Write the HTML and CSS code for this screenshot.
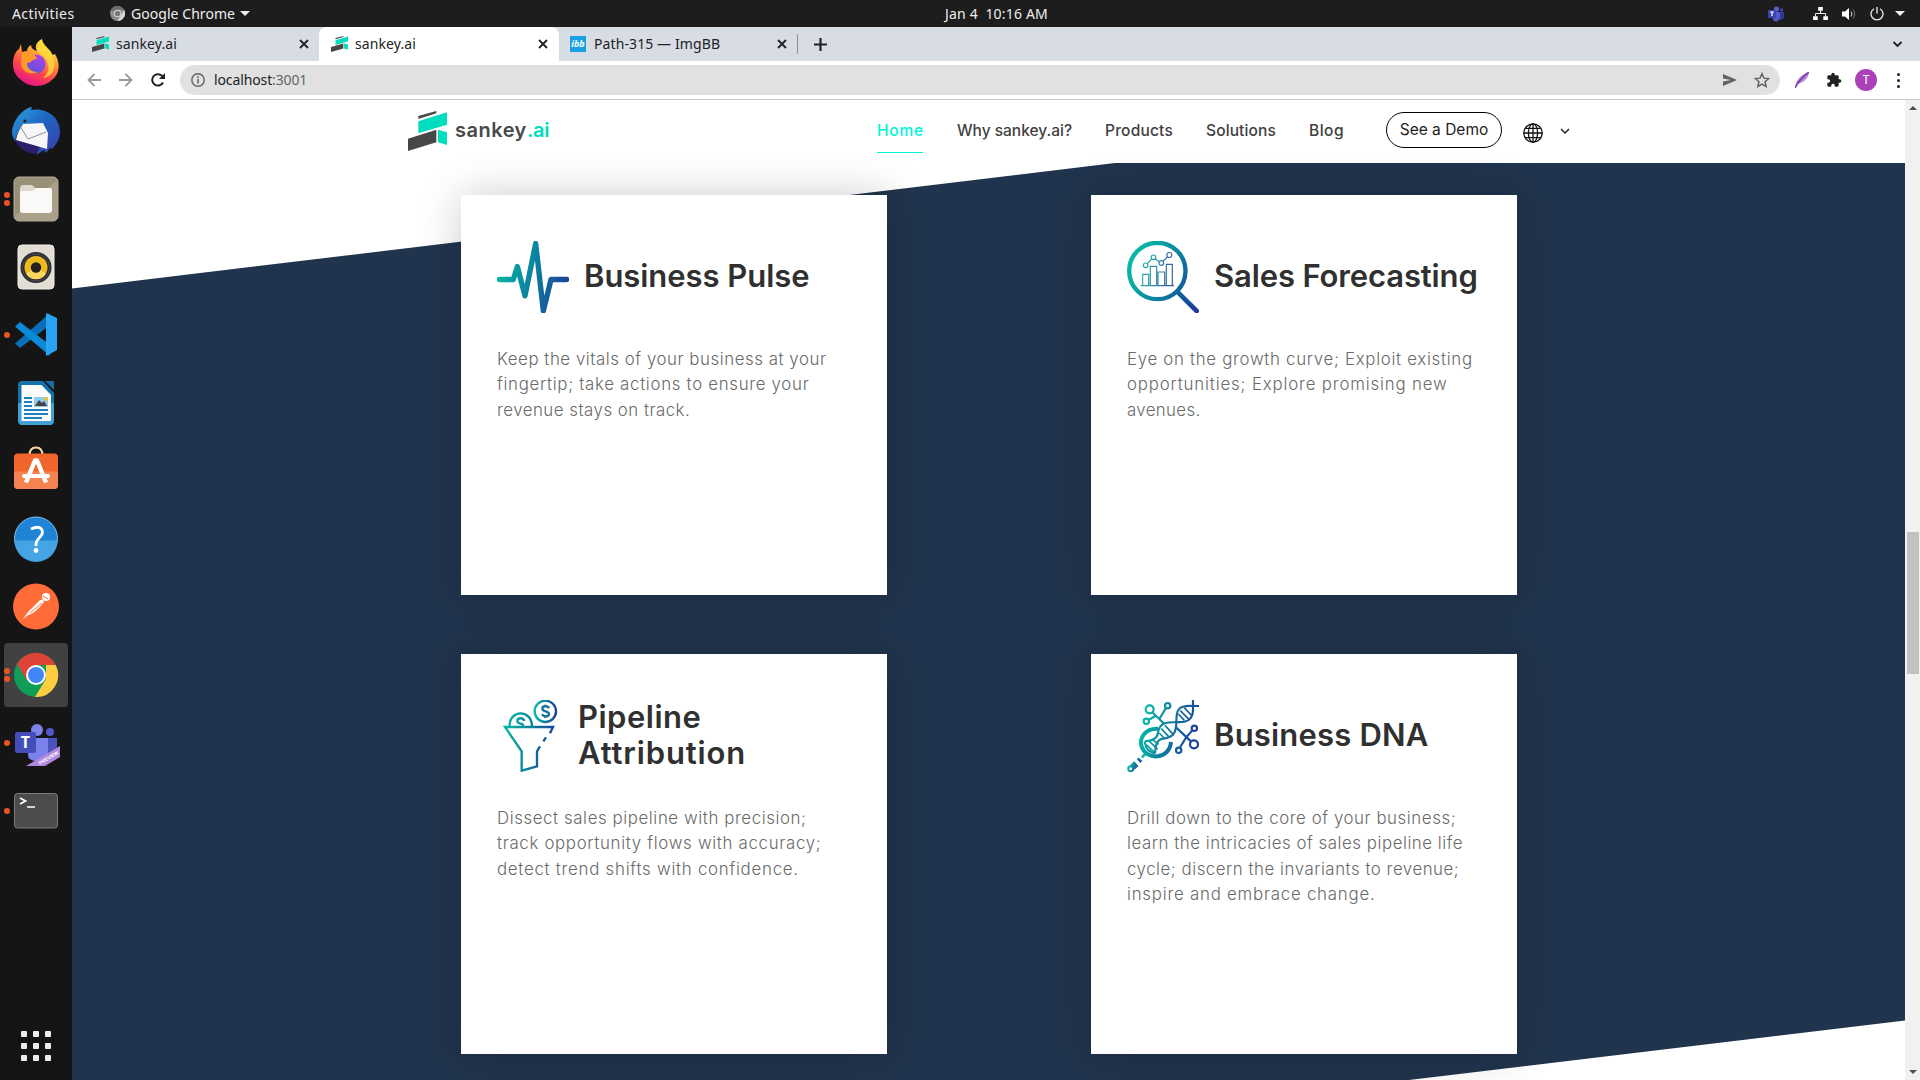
FILE: index.html
```html
<!DOCTYPE html>
<html lang="en">
<head>
<meta charset="utf-8">
<title>sankey.ai</title>
<link rel="stylesheet" href="styles.css">
</head>
<body>
<svg class="defs" width="0" height="0" aria-hidden="true">
  <defs>
    <symbol id="mark" viewBox="24 33 117 120" preserveAspectRatio="none">
      <path fill="#474748" d="M55 48 109 33v7L55 57zM24 116l85-27v38L24 153z"/>
      <path fill="#00dcbe" d="M55 64 141 37v37L55 100zM114 89l27 8v38l-27-8z"/>
    </symbol>
    <symbol id="close" viewBox="0 0 10 10"><path d="M1 1l8 8M9 1L1 9" stroke="#202124" stroke-width="1.800" fill="none"/></symbol>
  </defs>
</svg>
<div class="desktop">
  <header class="topbar">
    <span class="activities">Activities</span>
    <svg class="tb-chrome" viewBox="0 0 16 16"><circle cx="8" cy="8" r="8" fill="#8b8b8b"/><path d="M8 8 1 4a8 8 0 0 1 14 0H8z" fill="#6d6d6d"/><path d="M15 4a8 8 0 0 1-7 12l3.500-6z" fill="#d5d5d5"/><circle cx="8" cy="8" r="4" fill="#ddd"/><circle cx="8" cy="8" r="3" fill="#777"/></svg>
    <span class="appname">Google Chrome</span>
    <i class="tri"></i>
    <span class="clock">Jan 4&nbsp; 10:16 AM</span>
    <div class="tray">
      <svg class="tr-teams" viewBox="0 0 16 16"><circle cx="8.500" cy="3" r="2.600" fill="#5a62c3"/><circle cx="13.500" cy="4" r="1.700" fill="#3d45a5"/><path d="M11 6h5v4.500a3 3 0 0 1-4 3z" fill="#2f3896"/><path d="M5 6h7v6a4 4 0 0 1-7 2z" fill="#5059c9"/><path d="M0 4h8v8H0z" fill="#3b43ad"/><path d="M2 6h4M4 6v4" stroke="#fff" stroke-width="1.200"/></svg>
      <svg class="tr-net" viewBox="0 0 16 14"><path d="M5.500 0h5v4h-5zM0 10h5v4H0zM11 10h5v4h-5z" fill="#fff"/><path d="M8 4v3M2.500 10V7h11v3" stroke="#fff" fill="none"/></svg>
      <svg class="tr-vol" viewBox="0 0 15 14"><path d="M0 4.500h3L7 1v12L3 9.500H0z" fill="#fff"/><path d="M9 4.500q2 2.500 0 5" stroke="#ddd" fill="none"/><path d="M11 2.500q3.500 4.500 0 9" stroke="#777" fill="none"/></svg>
      <svg class="tr-pow" viewBox="0 0 14 14"><path d="M4 1.700a6 6 0 1 0 6 0M7 0v6.500" stroke="#eee" stroke-width="1.300" fill="none"/></svg>
      <i class="tri"></i>
    </div>
  </header>

  <div class="workspace">
    <nav class="dock">
      <div class="item"><svg viewBox="0 0 64 64">
        <defs>
          <linearGradient id="ff" x1=".8" y1="0" x2=".3" y2="1"><stop offset="0" stop-color="#fff44f"/><stop offset=".35" stop-color="#ffa436"/><stop offset=".65" stop-color="#ff4a4a"/><stop offset="1" stop-color="#e3108a"/></linearGradient>
          <linearGradient id="ffp" x1=".8" y1="0" x2=".3" y2="1"><stop offset="0" stop-color="#b33ff0"/><stop offset="1" stop-color="#5b53d8"/></linearGradient>
        </defs>
        <path fill="url(#ff)" d="M9 32C9 25 12 20 15 18l2-5 1 8c2-1 4-1 5-1 0-3 2-5 4-6 0 3 2 5 6 6C30 16 33 10 38 8c0 5 5 9 9 13l1 3 3-1c6 10 4 20-2 25a23 23 0 0 1-33 0C11 44 9 39 9 32z"/>
        <path fill="#ffdf3e" opacity=".75" d="M38 8c0 6 10 10 12 20 2 12-3 18-11 19 9-7 6-19-3-24-5-3-2-11 2-15z"/>
        <circle cx="32" cy="33" r="9.500" fill="url(#ffp)"/>
        <path fill="#ff9a2a" d="M18 22c6-3 13 0 15 6-6 0-5 4-10 4 0 6 5 9 11 9-9 4-17-1-17-9 0-4 1-7 1-10z"/>
      </svg></div>
      <div class="item"><svg viewBox="0 0 64 64">
        <defs><linearGradient id="tb" x1="0" y1="0" x2=".9" y2="1"><stop offset="0" stop-color="#2aa3e0"/><stop offset=".5" stop-color="#1f63c0"/><stop offset="1" stop-color="#3b3fae"/></linearGradient></defs>
        <path fill="#2a1f6a" d="M10 40 48 46 30 55q-14-2-20-15z"/>
        <path fill="url(#tb)" d="M8 33C9 20 20 9 28 8l-1 3c14-3 29 6 29 22 0 6-3 12-8 17l-2-1-4 5-2-3-8 5 4-8 3-14L18 26c-3 5-6 10-7 16-2-3-3-6-3-9z"/>
        <path fill="#f6f6f6" d="M12 41c1-6 3-10 7-16l20-1 5 10-1 16z"/>
        <path fill="none" stroke="#8f8f98" d="M16 27l8 13 18-7"/>
        <circle cx="21" cy="22" r="1.600" fill="#222"/>
      </svg></div>
      <div class="item"><b class="dot d2a"></b><b class="dot d2b"></b><svg viewBox="0 0 64 64">
        <rect x="10" y="10" width="44" height="44" rx="5" fill="#999078" stroke="#b5ad98"/><path d="M10 49 54 12v37q0 5-5 5H15q-5 0-5-5z" fill="#a9a08a"/>
        <path fill="#dcd8cc" d="M16 22q0-4 3-4h8q2 0 5 4v6H16z"/><path fill="#faf9f7" d="M16 25q0-1 2-1h10l4-3h14q2 0 2 2v20q0 3-3 3H19q-3 0-3-3z"/>
      </svg></div>
      <div class="item"><svg viewBox="0 0 64 64">
        <rect x="14" y="10" width="36" height="44" rx="4" fill="#e3ded4" stroke="#f1eee8"/><circle cx="32" cy="32.500" r="15.500" fill="#2c2c32"/><circle cx="32" cy="32.500" r="13.500" fill="none" stroke="#4a4a55"/><circle cx="32" cy="32.500" r="11.500" fill="#edb91c"/><path d="M22 38.500a11.500 11.500 0 0 0 20 0l-10-6z" fill="#fbd85b"/><circle cx="32" cy="32.500" r="5.200" fill="#222"/>
      </svg></div>
      <div class="item"><b class="dot"></b><svg viewBox="0 0 64 64">
        <path fill="#0a6fb8" d="M11 40.500 16 45 46 22V10z"/><path fill="#0b8ad8" d="M11 23.500 16 19l30 23v11z"/><path fill="#27a5f2" d="M42 10 53 15v32l-11 6z"/>
      </svg></div>
      <div class="item"><svg viewBox="0 0 64 64">
        <path d="M18 10h21l11 12v27q0 5-4 5H18q-4 0-4-5V14q0-4 4-4z" fill="#1573ab"/><path d="M14 32h36v17q0 5-4 5H18q-4 0-4-5z" fill="#42a0d4"/><path d="M17.500 14h20L47 24v26H17.500z" fill="#fbfbfb"/><path d="M41 10h9v9z" fill="#1a6c9d"/>
        <path d="M20 27h8M20 31h8M20 35h8M20 39h24M20 43h24M20 47h18" stroke="#1a82bd" stroke-width="2"/><path d="M30 26h14v10H30z" fill="#8fcdee"/><path d="M31 35l4-6 3 3 2-2 3 5z" fill="#444"/><circle cx="42" cy="28" r="2" fill="#f5b72e"/>
      </svg></div>
      <div class="item"><svg viewBox="0 0 64 64">
        <path d="M25.500 16.500q0-8 6.500-8t6.500 8" fill="none" stroke="#f6d6a0" stroke-width="2"/><rect x="10" y="14.500" width="44" height="35.500" rx="4" fill="#f0652b"/><path d="M10 32.500h44V46q0 4-4 4H14q-4 0-4-4z" fill="#f38350"/>
        <path d="M22 43.500l9-22h2l9 22" fill="none" stroke="#fff" stroke-width="4.500" stroke-linejoin="round"/><path d="M20 37h24" stroke="#fff" stroke-width="4" stroke-linecap="round"/>
      </svg></div>
      <div class="item"><svg viewBox="0 0 64 64">
        <circle cx="32" cy="31.500" r="21.500" fill="#1f83d6" stroke="#7cc0ee"/><path d="M10.500 33.500h43a21.500 21.500 0 0 1-43 0z" fill="#45a5e4"/>
        <path d="M27 22q8-4 11 1c3 7-7 7-6 16" fill="none" stroke="#fff" stroke-width="2.800"/><circle cx="32" cy="43.500" r="2.400" fill="#fff"/>
      </svg></div>
      <div class="item"><svg viewBox="0 0 64 64">
        <circle cx="32" cy="31.500" r="23" fill="#ff6c37"/><circle cx="42" cy="22" r="4" fill="#fff"/><path d="M18.500 44.500 25 36l11-11q3-1 4 2L34 34q-5 5-10 6z" fill="#fff"/><path d="M26 38l12-10M31 37l6-5M39 21l5 3" stroke="#ff6c37"/>
      </svg></div>
      <div class="item active"><b class="dot d2a"></b><b class="dot d2b"></b><svg viewBox="0 0 64 64">
        <circle cx="32" cy="32" r="22" fill="#109d58"/><path d="M12.900 21A22 22 0 0 1 51.700 22H32l-9 15.500z" fill="#dd4437"/><path d="M51.700 22A22 22 0 0 1 31 54l11-18V22z" fill="#ffcd40"/><circle cx="32" cy="32" r="10" fill="#fff"/><circle cx="32" cy="32" r="8" fill="#4285f4"/>
      </svg></div>
      <div class="item"><b class="dot"></b><svg viewBox="0 0 64 64">
        <circle cx="33" cy="19" r="6" fill="#7b83eb"/><circle cx="46" cy="21" r="4" fill="#5059c9"/><path d="M42 27h11v14q-4 8-11 5z" fill="#4a53bc"/><path d="M24 27h20v14q-1 9-11 9t-9-8z" fill="#7b83eb"/>
        <rect x="11" y="21" width="21" height="21" rx="2" fill="#454eb8"/><text x="21.500" y="37" text-anchor="middle" class="tletter">T</text><path d="M22 55 56 35v11L41 55z" fill="#b188e0"/><text class="preview" transform="translate(36 54) rotate(-31)">PREVIEW</text>
      </svg></div>
      <div class="item"><b class="dot"></b><svg viewBox="0 0 64 64">
        <rect x="10.500" y="14.500" width="43" height="34.500" rx="3" fill="#4c4c4c" stroke="#7b7b7b"/><path d="M16 19l5.500 3-5.500 3M23 28h8" fill="none" stroke="#fff" stroke-width="1.700"/>
      </svg></div>
      <div class="apps"><i></i><i></i><i></i><i></i><i></i><i></i><i></i><i></i><i></i></div>
    </nav>

    <div class="browser">
      <div class="tabs">
        <div class="tab t1"><svg class="fav"><use href="#mark"/></svg><span>sankey.ai</span><svg class="x"><use href="#close"/></svg></div>
        <div class="tab t2"><svg class="fav"><use href="#mark"/></svg><span>sankey.ai</span><svg class="x"><use href="#close"/></svg></div>
        <div class="tab t3"><em class="ibb">ibb</em><span>Path-315 — ImgBB</span><svg class="x"><use href="#close"/></svg></div>
        <i class="sep"></i>
        <svg class="plus" viewBox="0 0 12 12"><path d="M6 0v12M0 6h12" stroke="#202124" stroke-width="2"/></svg>
        <svg class="tabchev" viewBox="0 0 10 7"><path d="M1 1l4 4 4-4" fill="none" stroke="#202124" stroke-width="1.800"/></svg>
      </div>
      <div class="toolbar">
        <svg class="back" viewBox="0 0 14 14"><path d="M14 7H1.500M7.500 1 1.500 7l6 6" fill="none" stroke="#9a9a9a" stroke-width="1.800"/></svg>
        <svg class="fwd" viewBox="0 0 14 14"><path d="M0 7h12.500M6.500 1l6 6-6 6" fill="none" stroke="#9a9a9a" stroke-width="1.800"/></svg>
        <svg class="reload" viewBox="0 0 14 14"><path d="M12 9.500A5.700 5.700 0 1 1 11.500 3.500" fill="none" stroke="#202124" stroke-width="2"/><path d="M14 0v6H8z" fill="#202124"/></svg>
        <div class="omnibox">
          <svg class="info" viewBox="0 0 14 14"><circle cx="7" cy="7" r="6.200" fill="none" stroke="#5f6368" stroke-width="1.400"/><path d="M7 6v4.500M7 3.300v1.600" stroke="#5f6368" stroke-width="1.500"/></svg>
          <span class="url">localhost<span>:3001</span></span>
          <svg class="send" viewBox="0 0 14 12"><path d="M0 0l14 6-14 6V7.500L8 6 0 4.500z" fill="#5f6368"/></svg>
          <svg class="star" viewBox="0 0 24 24"><path d="M12 2.500l2.900 6.700 7.100.6-5.400 4.800 1.600 7.100L12 18l-6.200 3.700 1.600-7.100L2 9.800l7.100-.6z" fill="none" stroke="#5f6368" stroke-width="2.200"/></svg>
        </div>
        <svg class="feather" viewBox="0 0 14 16"><path d="M0 16C1 8 5 3 14 0c-1 8-6 10-11 12z" fill="#b58adb"/><path d="M0 16C3 10 7 5 14 0" stroke="#7a35ac" stroke-width="1.500" fill="none"/></svg>
        <svg class="puzzle" viewBox="0 0 24 24"><path fill="#202124" d="M20.500 11H19V7c0-1.100-.9-2-2-2h-4V3.500a2.500 2.500 0 0 0-5 0V5H4c-1.100 0-2 .9-2 2v3.800h1.500a2.700 2.700 0 0 1 0 5.400H2V20c0 1.100.9 2 2 2h3.800v-1.500a2.700 2.700 0 0 1 5.400 0V22H17c1.100 0 2-.9 2-2v-4h1.500a2.500 2.500 0 0 0 0-5z"/></svg>
        <span class="avatar">T</span>
        <span class="kebab"><i></i><i></i><i></i></span>
      </div>

      <div class="viewport">
        <div class="page">
          <header class="site">
            <svg class="logo"><use href="#mark"/></svg>
            <span class="brand">sankey<span>.ai</span></span>
            <a class="n1">Home</a><a class="n2">Why sankey.ai?</a><a class="n3">Products</a><a class="n4">Solutions</a><a class="n5">Blog</a>
            <button>See a Demo</button>
            <svg class="globe" viewBox="0 0 20 20"><g fill="none" stroke="#111" stroke-width="1.300"><circle cx="10" cy="10" r="9.200"/><ellipse cx="10" cy="10" rx="4.600" ry="9.200"/><path d="M10 .8v18.400M.8 10h18.400M2.500 5.300h15M2.500 14.700h15"/></g></svg>
            <svg class="chev" viewBox="0 0 10 7"><path d="M1 1l4 4 4-4" fill="none" stroke="#222" stroke-width="1.500"/></svg>
          </header>
          <main class="band">
            <div class="slant"></div>
            <div class="grid">
              <article class="card">
                <div class="head">
                  <svg viewBox="171 183 216 216"><defs><linearGradient id="g1" gradientUnits="userSpaceOnUse" x1="171" y1="270" x2="387" y2="320"><stop offset="0" stop-color="#06b9a6"/><stop offset=".45" stop-color="#0a85a0"/><stop offset="1" stop-color="#1b3f9a"/></linearGradient></defs><path d="M178 298.500h42l12-39 23 88 32-157 23 202 23-94h47" fill="none" stroke="url(#g1)" stroke-width="16" stroke-linecap="round" stroke-linejoin="round"/></svg>
                  <h2 class="k1">Business Pulse</h2>
                </div>
                <p><span class="s54">Keep the vitals of your business at your</span><span class="s67">fingertip; take actions to ensure your</span><span class="s49">revenue stays on track.</span></p>
              </article>
              <article class="card">
                <div class="head">
                  <svg viewBox="171 183 216 216"><defs><linearGradient id="g2" gradientUnits="userSpaceOnUse" x1="171" y1="270" x2="375" y2="370"><stop offset="0" stop-color="#06b9a6"/><stop offset=".5" stop-color="#0a85a0"/><stop offset="1" stop-color="#1b3f9a"/></linearGradient><linearGradient id="g2b" gradientUnits="userSpaceOnUse" x1="212" y1="250" x2="312" y2="270"><stop offset="0" stop-color="#25bba9"/><stop offset="1" stop-color="#3c5aa9"/></linearGradient></defs><g fill="none" stroke="url(#g2)" stroke-linecap="round"><circle cx="262" cy="273" r="84.500" stroke-width="13"/><path d="M324 337l56 56" stroke-width="14"/></g><g fill="none" stroke="url(#g2b)" stroke-width="3.500"><path d="M212 317h100M218 316v-33h18v33M241 316v-57h19v57M264 316v-40h20v40M289 316v-63h18v63M232 251l13-14M256 237l12 8M279 244l13-13"/><circle cx="227" cy="256" r="7"/><circle cx="250.500" cy="232" r="7"/><circle cx="274" cy="249" r="7"/><circle cx="298" cy="225" r="7.500"/></g></svg>
                  <h2 class="k2">Sales Forecasting</h2>
                </div>
                <p><span class="s69">Eye on the growth curve; Exploit existing</span><span class="s83">opportunities; Explore promising new</span><span class="s35">avenues.</span></p>
              </article>
              <article class="card">
                <div class="head">
                  <svg viewBox="171 180 216 216"><defs><linearGradient id="g3" gradientUnits="userSpaceOnUse" x1="192" y1="260" x2="345" y2="285"><stop offset="0" stop-color="#06b9a6"/><stop offset=".5" stop-color="#0a85a0"/><stop offset="1" stop-color="#1b3f9a"/></linearGradient><linearGradient id="g3b" x1="0" x2="1"><stop offset="0" stop-color="#06b9a6"/><stop offset="1" stop-color="#1b3f9a"/></linearGradient></defs><g fill="none" stroke-width="7"><path stroke="url(#g3)" d="M330 280l9-19H195l50 73v58l46-13v-45l9-15M310 304l8-12M209 259c-2-52 67-52 67 0M253 243c-4-12-20-10-21 0 0 7 7 8 14 9l5 5"/><circle cx="316" cy="214" r="32" stroke="url(#g3b)"/><path stroke="#16719d" d="M327 205c-4-9-20-8-20 1 0 10 20 6 20 16 0 9-17 9-21 1M316 194v7M316 227v7"/></g></svg>
                  <h2 class="k3"><span>Pipeline</span><span>Attribution</span></h2>
                </div>
                <p><span class="s58">Dissect sales pipeline with precision;</span><span class="s64">track opportunity flows with accuracy;</span><span class="s73">detect trend shifts with confidence.</span></p>
              </article>
              <article class="card">
                <div class="head">
                  <svg viewBox="171 180 216 216"><defs><linearGradient id="g4" gradientUnits="userSpaceOnUse" x1="215" y1="260" x2="375" y2="300"><stop offset="0" stop-color="#06b9a6"/><stop offset=".5" stop-color="#0f7a9f"/><stop offset="1" stop-color="#1b3f9a"/></linearGradient><linearGradient id="g4b" gradientUnits="userSpaceOnUse" x1="180" y1="372" x2="202" y2="384"><stop offset="0" stop-color="#06b9a6"/><stop offset="1" stop-color="#1b4f9a"/></linearGradient></defs><g fill="none" stroke="url(#g4)" stroke-width="6.500"><path stroke-width="12" d="M264 266c-38-2-58 28-49 54 13 40 82 42 88-14"/><circle cx="239" cy="208" r="12"/><circle cx="293" cy="197" r="8"/><circle cx="229" cy="244" r="8"/><circle cx="373" cy="265" r="8"/><circle cx="372" cy="313" r="12"/><circle cx="326" cy="331" r="8"/><path d="M247 217l36 35M288 204l-20 33M236 240l20-12M318 262l45 42M367 271l-19 22-19 31"/><path d="M369 180v18h18M369 198c-46-3-50 12-50 48-32 0-51 4-55 32-2 17-18 25-40 26M369 198c3 44-18 50-50 48 0 38-14 48-40 50-20 2-22 22-24 44M224 304c4 24 12 32 32 36"/><path stroke-width="5" d="M331 212l26 26M343 203l20 22M325 222l18 19M285 256l25 28M274 266l24 26M268 279l14 15M236 302l27 26M229 314l23 22M246 298l20 15"/></g><path d="M227 341l-11 11" stroke="#06b09f" stroke-width="8"/><g stroke="url(#g4b)" fill="none"><path d="M203 355l11 11" stroke-width="8"/><path d="M199 371l-12 11" stroke-width="19"/><circle cx="182" cy="386" r="7.500" stroke-width="6"/></g></svg>
                  <h2 class="k4">Business DNA</h2>
                </div>
                <p><span class="s56">Drill down to the core of your business;</span><span class="s53">learn the intricacies of sales pipeline life</span><span class="s52">cycle; discern the invariants to revenue;</span><span class="s76">inspire and embrace change.</span></p>
              </article>
            </div>
          </main>
        </div>
        <div class="scroll"><i class="up"></i><i class="thumb"></i><i class="down"></i></div>
      </div>
    </div>
  </div>
</div>
</body>
</html>
```
FILE: styles.css
```css
* { box-sizing: border-box; }
body { margin: 0; overflow: hidden; font-family: "Noto Sans", sans-serif; }
svg { display: block; flex: none; }
.defs { position: absolute; }
.desktop { width: 1920px; height: 1080px; display: flex; flex-direction: column; background: #151515; }

/* system bar */
.topbar { height: 27px; flex: none; background: #1d1d1d; color: #eee; display: flex; align-items: center; font-size: 14px; line-height: 27px; white-space: nowrap; }
.activities { margin-left: 12px; width: 98px; letter-spacing: .42px; }
.tb-chrome { width: 15px; height: 15px; }
.appname { margin-left: 6px; width: 109px; letter-spacing: .05px; }
.tri { border: 5px solid transparent; border-top-color: #eee; border-bottom: 0; width: 0; height: 0; }
.clock { margin-left: 695px; letter-spacing: .17px; }
.tray { margin-left: auto; padding-right: 15px; display: flex; align-items: center; }
.tr-teams { width: 16px; height: 16px; margin-right: 29px; }
.tr-net { width: 15px; height: 13px; margin-right: 14px; }
.tr-vol { width: 15px; height: 14px; margin-right: 13px; }
.tr-pow { width: 14px; height: 14px; margin-right: 11px; }

/* dock */
.workspace { flex: 1; display: flex; min-height: 0; }
.dock { width: 72px; flex: none; padding: 4px 4px 0; display: flex; flex-direction: column; gap: 4px; background: #151515; }
.item { position: relative; width: 64px; height: 64px; border-radius: 4px; }
.item.active { background: #414141; }
.item svg { width: 64px; height: 64px; }
.dot { position: absolute; left: 0; top: 29px; width: 6px; height: 6px; border-radius: 3px; background: #e95420; }
.dot.d2a { top: 25px; }
.dot.d2b { top: 33px; }
.tletter { font: 700 16px "Open Sans", sans-serif; fill: #fff; }
.preview { font: 700 4.800px "Liberation Sans", sans-serif; fill: #fff; }
.apps { margin: auto 0 19px 17px; display: grid; grid-template-columns: repeat(3, 6px); gap: 6px; }
.apps i { height: 6px; background: #eee; border-radius: 1px; }

/* browser */
.browser { flex: 1; display: flex; flex-direction: column; min-width: 0; background: #fff; }
.tabs { height: 34px; flex: none; background: #d8dce5; display: flex; align-items: center; color: #222; font-size: 14px; white-space: nowrap; }
.tab { height: 34px; display: flex; align-items: center; padding: 0 10px 0 12px; width: 238px; }
.tab.t1 { width: 247px; padding-left: 20px; }
.tab.t2 { width: 240px; padding-right: 11px; background: #fff; border-radius: 8px 8px 0 0; }
.tab span { margin: -2px 0 0 7px; flex: 1; letter-spacing: .1px; }
.fav { width: 17px; height: 16px; }
.x { width: 10px; height: 10px; }
.ibb { width: 16px; height: 16px; background: #1ba1e2; color: #fff; font: italic 700 9px/15px "Open Sans", sans-serif; text-align: center; }
.tab.t3 { padding-left: 11px; }
.t3 span { margin-left: 8px; }
.sep { width: 1px; height: 20px; background: #8b9098; }
.plus { width: 13px; height: 13px; margin-left: 16px; }
.tabchev { width: 11px; height: 7px; margin: 0 17px 0 auto; }
.toolbar { height: 39px; flex: none; display: flex; align-items: center; padding-left: 15px; border-bottom: 1px solid #cbcbcb; }
.back, .fwd, .reload { width: 14px; height: 14px; }
.fwd, .reload { margin-left: 18px; }
.omnibox { margin-left: 15px; width: 1600px; height: 30px; border-radius: 15px; background: #e1e1e1; display: flex; align-items: center; padding: 0 10px 0 11px; }
.info { width: 14px; height: 14px; }
.url { margin: -2px 0 0 9px; flex: 1; font-size: 14px; letter-spacing: -.12px; color: #202124; }
.url span { color: #666; }
.send { width: 14px; height: 12px; margin-right: 17px; }
.star { width: 16px; height: 16px; }
.feather { width: 14px; height: 16px; margin-left: 15px; }
.puzzle { width: 16px; height: 16px; margin-left: 17px; }
.avatar { width: 22px; height: 22px; margin-left: 13px; border-radius: 50%; background: #ab41b8; color: #fff; font-size: 12px; line-height: 22px; text-align: center; }
.kebab { margin-left: 20px; display: grid; gap: 3px; }
.kebab i { width: 3px; height: 3px; border-radius: 2px; background: #202124; }

/* page */
.viewport { flex: 1; display: flex; min-height: 0; }
.page { width: 1833px; display: flex; flex-direction: column; overflow: hidden; font-family: Inter, sans-serif; }
.site { height: 63px; flex: none; display: flex; align-items: center; padding-left: 336px; color: #404040; white-space: nowrap; }
.logo { width: 39px; height: 40px; margin-top: -1px; }
.brand { margin: -4px 0 0 8px; width: 422px; font-size: 20px; font-weight: 600; letter-spacing: .5px; color: #47484a; }
.brand span { color: #00dcbe; letter-spacing: -.2px; }
.site a { height: 46px; line-height: 44px; font-size: 15.500px; font-weight: 500; }
.site .n1 { color: #00f5d8; letter-spacing: .8px; width: 46px; height: 43px; line-height: 42px; border-bottom: 1px solid #00f5d8; }
.n2 { margin-left: 34px; width: 114px; }
.n3 { margin-left: 34px; width: 68px; letter-spacing: .21px; }
.n4 { margin-left: 33px; width: 71px; letter-spacing: .13px; }
.n5 { margin-left: 32px; width: 35px; letter-spacing: .49px; }
.site button { margin: -3px 0 0 42px; width: 116px; height: 36px; padding: 0 0 2px; border: 1px solid #000; border-radius: 18px; background: #fff; font: 400 15.500px Inter, sans-serif; color: #222; }
.globe { width: 20px; height: 20px; margin: 3px 0 0 21px; }
.chev { width: 10px; height: 7px; margin-left: 17px; }
.band { position: relative; flex: 1; }
.slant { position: absolute; inset: 0; background: #21344d; clip-path: polygon(0 125.500px, 1043px 0, 100% 0, 100% 857.500px, 1337px 917px, 0 917px); }
.grid { position: relative; padding: 32px 0 0 389px; display: grid; grid-template-columns: 426px 426px; grid-auto-rows: 400px; column-gap: 204px; row-gap: 59px; }
.card { background: #fff; padding: 46px 36px 0; box-shadow: 0 0 40px rgba(0, 0, 0, .2); white-space: nowrap; }
.head { height: 72px; display: flex; align-items: center; }
.head svg { width: 72px; height: 72px; }
.card h2 { margin: -2px 0 0 15px; font-size: 31px; line-height: 36px; font-weight: 580; color: #303030; }
.card h2 span, .card p span { display: block; }
.k1 { letter-spacing: -.05px; }
.card .k2 { letter-spacing: -.13px; }
.card .k3 { margin-left: 9px; letter-spacing: .5px; }
.k3 span + span { letter-spacing: .85px; }
.k4 { letter-spacing: .2px; }
.card p { margin: 34px 0 0; font-size: 16.850px; line-height: 25.400px; color: #6a6a6a; font-weight: 300; }
.s35 { letter-spacing: .35px; }
.s49 { letter-spacing: .49px; }
.s52 { letter-spacing: .52px; }
.s53 { letter-spacing: .53px; }
.s54 { letter-spacing: .54px; }
.s56 { letter-spacing: .56px; }
.s58 { letter-spacing: .58px; }
.s64 { letter-spacing: .67px; }
.s67 { letter-spacing: .69px; }
.s69 { letter-spacing: .69px; }
.s73 { letter-spacing: .73px; }
.s76 { letter-spacing: .76px; }
.s83 { letter-spacing: .83px; }

.scroll { width: 15px; background: #f1f1f1; display: flex; flex-direction: column; align-items: center; }
.up, .down { width: 0; height: 0; border: 4px solid transparent; }
.up { border-top: 0; border-bottom-color: #505050; margin-top: 6px; }
.thumb { width: 12px; height: 142px; margin-top: 422px; background: #c1c1c1; }
.down { border-bottom: 0; border-top-color: #505050; margin: auto 0 6px; }
```
